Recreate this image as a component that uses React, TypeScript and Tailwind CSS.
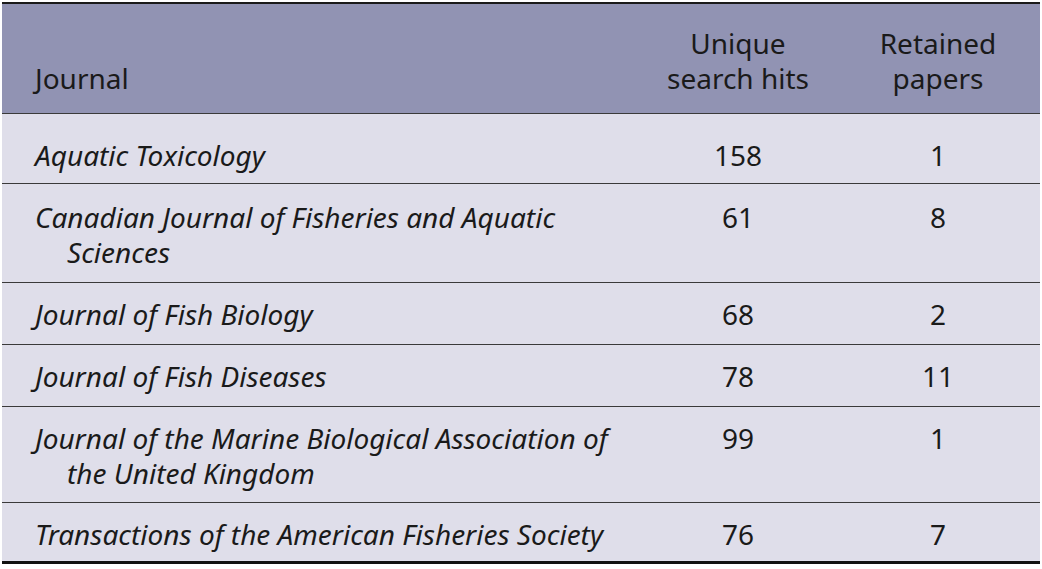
const rows = [
  { journal: 'Aquatic Toxicology', hits: 158, retained: 1, pad: 'pt-[24px] pb-[10px]' },
  { journal: 'Canadian Journal of Fisheries and Aquatic Sciences', hits: 61, retained: 8, pad: 'pt-[16px] pb-[12px]' },
  { journal: 'Journal of Fish Biology', hits: 68, retained: 2, pad: 'pt-[14px] pb-[12px]' },
  { journal: 'Journal of Fish Diseases', hits: 78, retained: 11, pad: 'pt-[14px] pb-[12px]' },
  {
    journal: 'Journal of the Marine Biological Association of the United Kingdom',
    hits: 99,
    retained: 1,
    pad: 'pt-[14px] pb-[11px]',
  },
  { journal: 'Transactions of the American Fisheries Society', hits: 76, retained: 7, pad: 'pt-[14px] pb-[9px]' },
]

export default function App() {
  return (
    <div className="min-h-screen bg-white pt-[2px] px-[2px]" style={{ fontFamily: '"Noto Sans", "Open Sans", sans-serif' }}>
      <table className="w-[1038px] border-collapse text-[28px] leading-[35px] text-[#1a1a1a]">
        <thead>
          <tr className="bg-[#9193b3] border-t-2 border-[#1a1a1a] h-[110px]">
            <th className="align-bottom text-left font-normal pl-[33px] pb-[17px] w-[638px]">Journal</th>
            <th className="align-bottom text-center font-normal pb-[17px] w-[196px]">
              Unique
              <br />
              search hits
            </th>
            <th className="align-bottom text-center font-normal pb-[17px]">
              Retained
              <br />
              papers
            </th>
          </tr>
        </thead>
        <tbody className="bg-[#dfdeea] border-b-[3px] border-[#111]">
          {rows.map((row) => (
            <tr key={row.journal} className="border-t border-[#3a3a3a]">
              <td className={`align-top pl-[65px] pr-2 -indent-[32px] italic ${row.pad}`}>{row.journal}</td>
              <td className={`align-top text-center ${row.pad}`}>{row.hits}</td>
              <td className={`align-top text-center ${row.pad}`}>{row.retained}</td>
            </tr>
          ))}
        </tbody>
      </table>
    </div>
  )
}
